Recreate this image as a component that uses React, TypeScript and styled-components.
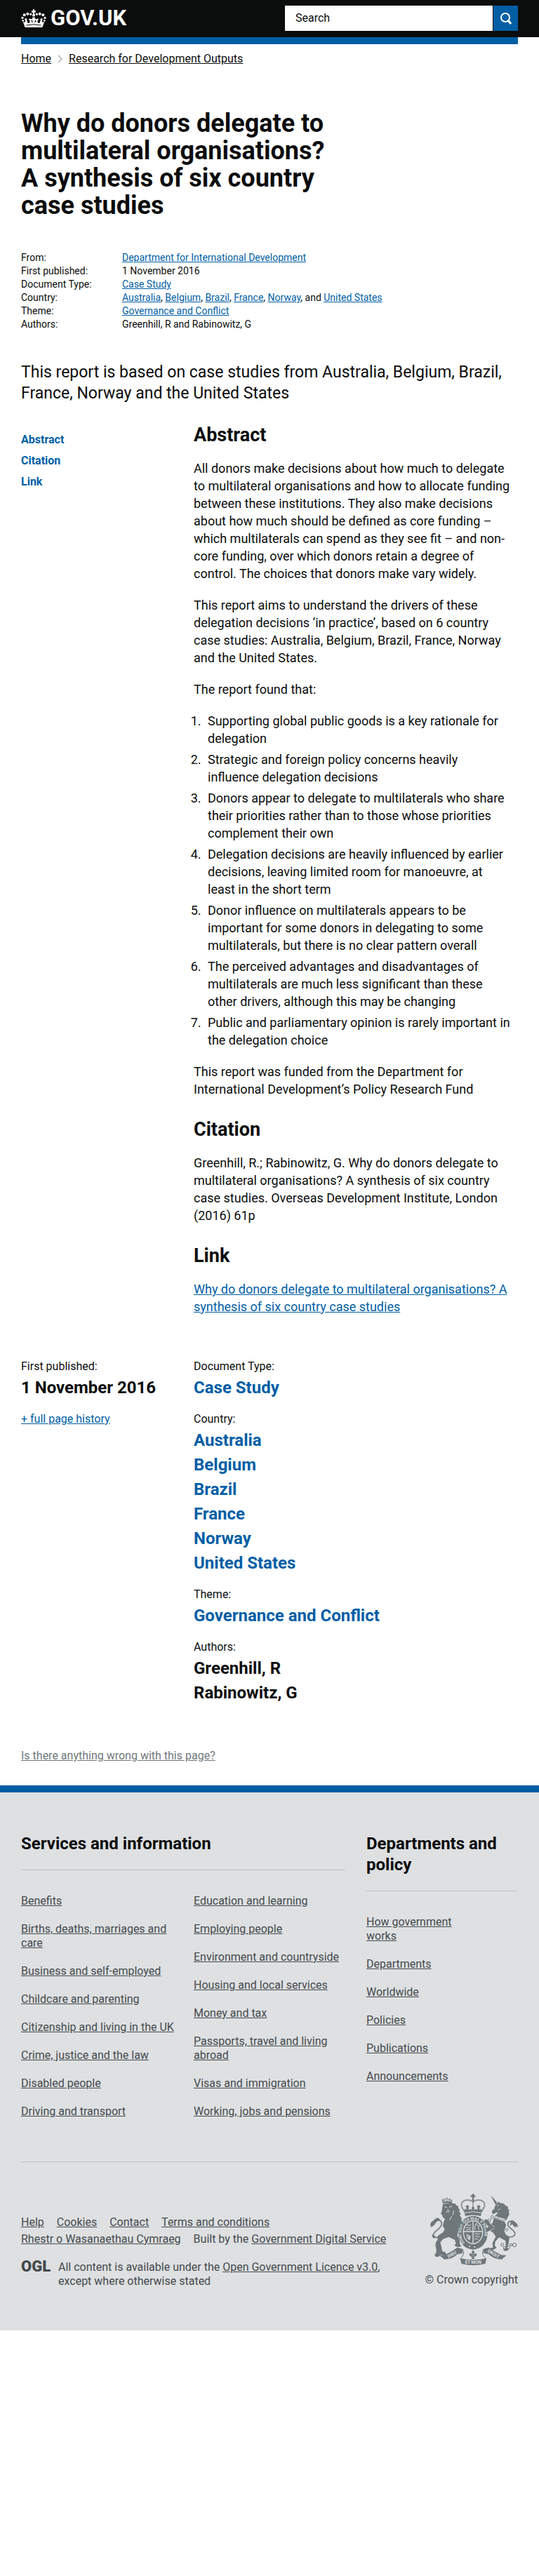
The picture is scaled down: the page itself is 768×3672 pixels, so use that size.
import React from 'react';
import styled, { createGlobalStyle } from 'styled-components';

const ink = '#0b0c0c';
const blue = '#005ea5';
const footerInk = '#454a4d';
const crestInk = '#6f777b';
const footerBg = '#dee0e2';

const GlobalStyle = createGlobalStyle`
  *, *::before, *::after { box-sizing: border-box; }
  body {
    margin: 0;
    background: #fff;
    color: ${ink};
    font-family: Roboto, "Liberation Sans", Arial, sans-serif;
    font-size: 16px;
    line-height: 20px;
  }
  h1, h2, p, ul, ol, dl, dd { margin: 0; padding: 0; }
  ul { list-style: none; }
`;

const Container = styled.div`
  max-width: 1020px;
  margin: 0 auto;
  padding: 0 30px;
`;

/* ---------- Header ---------- */

const HeaderBand = styled.header`
  background: ${ink};
`;

const HeaderRow = styled(Container)`
  display: flex;
  align-items: flex-start;
  justify-content: space-between;
  padding-top: 8px;
  padding-bottom: 9px;
`;

const LogoLink = styled.a`
  display: flex;
  align-items: center;
  gap: 6px;
  height: 36px;
  color: #fff;
  font-size: 31px;
  line-height: 36px;
  font-weight: 700;
  text-decoration: none;
`;

const SearchForm = styled.form`
  display: flex;
  gap: 1px;
  width: 332px;
  height: 36px;
`;

const SearchInput = styled.input`
  flex: 1;
  min-width: 0;
  border: 0;
  border-radius: 0;
  padding: 0 15px;
  background: #fff;
  color: ${ink};
  font: inherit;
  &::placeholder { color: ${ink}; opacity: 1; }
`;

const SearchButton = styled.button`
  display: flex;
  align-items: center;
  justify-content: center;
  width: 35px;
  border: 0;
  padding: 0;
  background: ${blue};
`;

const BlueBar = styled.div`
  height: 10px;
  background: ${blue};
`;

const Breadcrumbs = styled.ol`
  display: flex;
  align-items: center;
  gap: 9px;
  padding-top: 11px;
  list-style: none;
  li { display: flex; align-items: center; gap: 9px; }
  a { color: ${ink}; }
`;

/* ---------- Title block ---------- */

const Title = styled.h1`
  max-width: 456px;
  margin-top: 63px;
  font-size: 36px;
  line-height: 39px;
  font-weight: 700;
`;

const TextLink = styled.a`
  color: ${blue};
`;

const Metadata = styled.dl`
  display: grid;
  grid-template-columns: 144px 1fr;
  margin-top: 45px;
  font-size: 14px;
  line-height: 19px;
`;

const Summary = styled.p`
  margin-top: 44px;
  font-size: 23px;
  line-height: 30px;
`;

/* ---------- Body ---------- */

const Columns = styled.div<{ $top: number }>`
  display: grid;
  grid-template-columns: 1fr 2fr;
  column-gap: 15px;
  margin-top: ${(p) => p.$top}px;
`;

const Contents = styled.ul`
  display: flex;
  flex-direction: column;
  gap: 10px;
  padding-top: 12px;
  a { color: ${blue}; font-weight: 700; text-decoration: none; }
`;

const Article = styled.article`
  font-size: 18px;
  line-height: 25px;
  p + p, p + ol, ol + p { margin-top: 20px; }
`;

const SectionTitle = styled.h2`
  margin-bottom: 20px;
  font-size: 27px;
  line-height: 30px;
  font-weight: 700;
  p + & { margin-top: 30px; }
`;

const Findings = styled.ol`
  padding-left: 15px;
  padding-right: 10px;
  li { padding-left: 5px; }
  li + li { margin-top: 5px; }
`;

const FactGroup = styled.div`
  & + & { margin-top: 20px; }
`;

const FactValue = styled.div`
  padding-top: 5px;
  font-size: 24px;
  line-height: 30px;
  font-weight: 700;
  a { color: ${blue}; text-decoration: none; }
`;

const HistoryLink = styled(TextLink)`
  display: inline-block;
  margin-top: 20px;
`;

const ReportProblem = styled.p`
  padding: 65px 0 32px;
  a { color: ${crestInk}; }
`;

/* ---------- Footer ---------- */

const FooterBand = styled.footer`
  border-top: 10px solid ${blue};
  padding: 58px 0 60px;
  background: ${footerBg};
  color: ${footerInk};
  a { color: ${footerInk}; }
`;

const FooterNav = styled.div`
  display: grid;
  grid-template-columns: minmax(0, 462fr) minmax(0, 216fr);
  column-gap: 30px;
  padding-bottom: 41px;
  border-bottom: 1px solid #bfc1c3;
`;

const FooterTitle = styled.h2`
  margin-bottom: 34px;
  border-bottom: 1px solid #bfc1c3;
  padding-bottom: 22px;
  color: ${ink};
  font-size: 24px;
  line-height: 30px;
  font-weight: 700;
`;

const FooterLists = styled.div`
  display: grid;
  grid-template-columns: 230px 1fr;
  column-gap: 16px;
`;

const FooterList = styled.ul<{ $narrow?: boolean }>`
  max-width: ${(p) => (p.$narrow ? '140px' : 'none')};
  li { margin-bottom: 20px; }
`;

const FooterMeta = styled.div`
  display: flex;
  align-items: flex-end;
  justify-content: space-between;
  padding-top: 45px;
`;

const SupportLinks = styled.ul`
  display: flex;
  flex-wrap: wrap;
  column-gap: 18px;
  max-width: 530px;
  line-height: 24px;
`;

const LicenceRow = styled.div`
  display: flex;
  gap: 12px;
  margin-top: 18px;
  p { max-width: 470px; }
`;

const OglMark = styled.span`
  width: 41px;
  font-size: 22px;
  line-height: 18px;
  font-weight: 900;
`;

const Copyright = styled.div`
  display: flex;
  flex-direction: column;
  align-items: flex-end;
  gap: 11px;
  padding-bottom: 2px;
  white-space: nowrap;
`;

const CrownIcon = () => (
  <svg width="36" height="27" viewBox="0 0 108 81" fill="#fff" aria-hidden="true">
    <path d="M50 1h8l-2 6h7v7h-7l2 7h-8l2-7h-7V7h7z" />
    <circle cx="54" cy="26" r="6" />
    <circle cx="41" cy="22" r="5" />
    <circle cx="67" cy="22" r="5" />
    <circle cx="28" cy="20" r="6" />
    <circle cx="80" cy="20" r="6" />
    <circle cx="14" cy="25" r="6" />
    <circle cx="94" cy="25" r="6" />
    <circle cx="6" cy="37" r="5" />
    <circle cx="102" cy="37" r="5" />
    <circle cx="8" cy="49" r="4" />
    <circle cx="100" cy="49" r="4" />
    <path d="M8 54l8 3 3-10-5-3 6-5 7 4-3 3 5 14 7-1 2-10-6-4 6-5 7 5-2 5 6 10v-12l-5 1v-8l5 1-1-7h12l-1 7 5-1v8l-5-1v12l6-10-2-5 7-5 6 5-6 4 2 10 7 1 5-14-3-3 7-4 6 5-5 3 3 10 8-3-9 24H17z" />
    <path d="M22 69q32-7 64 0" fill="none" stroke={ink} strokeWidth="3" />
  </svg>
);

const SearchIcon = () => (
  <svg width="18" height="18" viewBox="0 0 18 18" fill="none" stroke="#fff" strokeWidth="2" aria-hidden="true">
    <circle cx="8" cy="8" r="6" />
    <path d="M12 12l4 5" strokeWidth="3" />
  </svg>
);

const Chevron = () => (
  <svg width="7" height="12" viewBox="0 0 7 12" fill="none" stroke="#bfc1c3" strokeWidth="2" aria-hidden="true">
    <path d="M1 1l5 5-5 5" />
  </svg>
);

const Crest = () => (
  <svg width="125" height="102" viewBox="99 81 375 306" fill={crestInk} role="img" aria-label="Royal coat of arms">
    <defs>
      <path id="garter" d="M251 295A50 57 0 1 1 312 295" />
    </defs>

    {/* lion with its crown and tail */}
    <path d="M152 122l-3-20 8 7 3-10 7 7 4-11 5 11 8-6 2 10 8-5-3 20q-20-6-39-3z" />
    <path d="M154 113q18-4 36 0M160 103l4 9 6-9 5 9 6-8" fill="none" stroke={footerBg} strokeWidth="3" />
    <path d="M153 125q26-6 52-2l6 8 9 4-2 7 8 8-4 7 8 10-5 6 9 14-2 10 6 8-14 20-7 24-3 12q12 10 11 23l1 15 7 5-7 5-14-1-11-6 8-6-5-18-26-12-24 9-12 14 6 24 2 14 12 3 7 9-9 5-16-1-10 8-13-1-4-9 7-5 1-16-4-20q1-14 10-22l-3-10q6-12 24-20l9-14-8-14 2-14 7-17-10-8-2-10-6-3 4-10z" />
    <path d="M160 137l11 3M180 139l12-4M173 147l3 7 6 1M166 160l7-2 6 4M200 153l-5 20M190 178l-7 16" fill="none" stroke={footerBg} strokeWidth="3" />
    <path d="M152 256c-20 18-43 14-41 2 5-20 39-28 37-49-2-20-25-18-38-1" fill="none" stroke={crestInk} strokeWidth="5" />
    <path d="M135 185c-16-3-18 12-29 15-6 5-8 14-4 24 11-4 17-11 22-20 5-6 13-9 21-6z" />
    <path d="M122 263l-13-7-2 8 7 9z" />

    {/* royal crown */}
    <path d="M278 82h8v6h6v7h-6v6h-8v-6h-6v-7h6z" />
    <circle cx="282" cy="107" r="5" />
    <path d="M282 118c-9-14-46-14-49 8-1 14 7 20 11 31M282 118c9-14 46-14 49 8 1 14-7 20-11 31" fill="none" stroke={crestInk} strokeWidth="6" strokeDasharray="5 2" />
    <path d="M282 110v46" stroke={crestInk} strokeWidth="5" strokeDasharray="4 2" />
    <path d="M244 157l3-12 6 6 1-10-4-5 8-7 8 7-4 5 2 10 7-5 7 6-2-11 6-6 6 6-2 11 7-6 7 5 2-10-4-5 8-7 8 7-4 5 1 10 6-6 3 12-5 20q-34-9-66 0z" />
    <path d="M247 163q35-9 70 0" fill="none" stroke={footerBg} strokeWidth="3" />

    {/* garter and shield */}
    <ellipse cx="282" cy="248" rx="63" ry="72" />
    <ellipse cx="282" cy="246" rx="43" ry="51" fill={footerBg} />
    <ellipse cx="282" cy="246" rx="39" ry="47" />
    <path d="M282 199v94M243 243h78" stroke={footerBg} strokeWidth="4" />
    <path d="M253 217l8-5 4 6 9-4M251 227l10-3 4 5 9-4M253 236l10-2 10 2M290 236v-14q-1-10 8-14l3 9 9 3-7 6 5 10M256 255l15 9-5 15-9-10zM263 260v16M268 262l-4 15M289 254l9-3 4 5 9-4M289 265l9-3 4 5 8-4M288 276l7-3 4 4 5-4" fill="none" stroke={footerBg} strokeWidth="3" />
    <text fill={footerBg} fontSize="17" fontWeight="700">
      <textPath href="#garter" startOffset="6">HONI SOIT QUI MAL Y PENSE</textPath>
    </text>
    <circle cx="267" cy="306" r="3" fill={footerBg} />
    <circle cx="289" cy="309" r="3" fill={footerBg} />

    {/* unicorn, its mane, tail and chain */}
    <path d="M357 87l29 33-8 8z" />
    <path d="M379 128l8-7 5-6 5 6 15 2 11 10 9 5-1 7 6 7-3 8 4 8-6 10-7 16-8-6-33-8-4-9 10-9-8-1-13 8-5-4-1-9 10-14z" />
    <path d="M386 132l7-1M369 146l6 1M388 151l10-5" stroke={footerBg} strokeWidth="3" />
    <path d="M378 174l43 13-3 9-44-13z" fill="none" stroke={crestInk} strokeWidth="3" strokeDasharray="5 2" />
    <path d="M372 185l44 15 8 15-8 24 5 17 16 16-3 23-6 15 6 13-14 3-10-5 12-10-1-28-27-15-17 18-2 17 8 10-20 12-15-2 6-9 13-2-2-20 14-27-10-16-14-10-13 5-7-10 14-12-12-12-9-13 8-7 11 4 9 14 8 2z" />
    <path d="M341 187l16 24 18 13M354 239l19-10" fill="none" stroke={footerBg} strokeWidth="2" />
    <path d="M418 254c18 22 47 10 43-4-4-16-31-22-30-40 1-12 18-16 31-2" fill="none" stroke={crestInk} strokeWidth="5" />
    <path d="M445 195c11-2 17 8 26 15l3 16-8-6-3 7-13-15-10 6z" />
    <g fill="none" stroke={crestInk} strokeWidth="3">
      <circle cx="364" cy="181" r="6" />
      <circle cx="352" cy="195" r="6" />
      <circle cx="358" cy="222" r="5" />
      <circle cx="427" cy="235" r="5" />
      <circle cx="431" cy="272" r="5" />
      <circle cx="407" cy="299" r="6" />
      <circle cx="417" cy="313" r="6" />
      <circle cx="433" cy="311" r="6" />
      <circle cx="444" cy="300" r="5" />
      <circle cx="459" cy="300" r="8" />
    </g>

    {/* motto ribbon */}
    <path d="M139 345l23-2q29-14 53-32l24 7-2 18-22 4q-20 22-55 22z" />
    <path d="M425 345l-23-2q-29-14-53-32l-24 7 2 18 22 4q20 22 55 22z" />
    <path d="M226 357q56 14 114 0l-6 24q-52 12-101 0z" />
    <path d="M238 322q11 16-9 36M326 322q-11 16 9 36" fill="none" stroke={crestInk} strokeWidth="3" />
    <path d="M282 322l6 9-2 9 9-5 4 8-9 8h-4l3 9h-14l3-9h-4l-9-8 4-8 9 5-2-9z" />
    <path d="M280 336v14M284 336v14" stroke={footerBg} strokeWidth="1" />
    <g fill={footerBg} fontSize="19" fontWeight="700" textAnchor="middle">
      <text transform="translate(195 346) rotate(-31)">DIEU</text>
      <text x="283" y="381">ET MON</text>
      <text transform="translate(366 344) rotate(31)">DROIT</text>
    </g>
  </svg>
);

const countries = ['Australia', 'Belgium', 'Brazil', 'France', 'Norway', 'United States'];

const findings = [
  'Supporting global public goods is a key rationale for delegation',
  'Strategic and foreign policy concerns heavily influence delegation decisions',
  'Donors appear to delegate to multilaterals who share their priorities rather than to those whose priorities complement their own',
  'Delegation decisions are heavily influenced by earlier decisions, leaving limited room for manoeuvre, at least in the short term',
  'Donor influence on multilaterals appears to be important for some donors in delegating to some multilaterals, but there is no clear pattern overall',
  'The perceived advantages and disadvantages of multilaterals are much less significant than these other drivers, although this may be changing',
  'Public and parliamentary opinion is rarely important in the delegation choice',
];

const servicesLeft = [
  'Benefits',
  'Births, deaths, marriages and care',
  'Business and self-employed',
  'Childcare and parenting',
  'Citizenship and living in the UK',
  'Crime, justice and the law',
  'Disabled people',
  'Driving and transport',
];

const servicesRight = [
  'Education and learning',
  'Employing people',
  'Environment and countryside',
  'Housing and local services',
  'Money and tax',
  'Passports, travel and living abroad',
  'Visas and immigration',
  'Working, jobs and pensions',
];

const departments = ['How government works', 'Departments', 'Worldwide', 'Policies', 'Publications', 'Announcements'];

const LinkList = ({ items, narrow }: { items: string[]; narrow?: boolean }) => (
  <FooterList $narrow={narrow}>
    {items.map((item) => (
      <li key={item}><a href="#">{item}</a></li>
    ))}
  </FooterList>
);

const Fact = ({ label, values, linked }: { label: string; values: string[]; linked?: boolean }) => (
  <FactGroup>
    <div>{label}</div>
    {values.map((value) => (
      <FactValue key={value}>{linked ? <a href="#">{value}</a> : value}</FactValue>
    ))}
  </FactGroup>
);

export default function App() {
  return (
    <>
      <GlobalStyle />
      <HeaderBand>
        <HeaderRow>
          <LogoLink href="#"><CrownIcon />GOV.UK</LogoLink>
          <SearchForm role="search">
            <SearchInput type="search" placeholder="Search" aria-label="Search" />
            <SearchButton type="submit" aria-label="Search"><SearchIcon /></SearchButton>
          </SearchForm>
        </HeaderRow>
      </HeaderBand>

      <Container as="main">
        <BlueBar />
        <Breadcrumbs>
          <li><a href="#">Home</a></li>
          <li><Chevron /><a href="#">Research for Development Outputs</a></li>
        </Breadcrumbs>

        <Title>Why do donors delegate to multilateral organisations? A synthesis of six country case studies</Title>

        <Metadata>
          <dt>From:</dt>
          <dd><TextLink href="#">Department for International Development</TextLink></dd>
          <dt>First published:</dt>
          <dd>1 November 2016</dd>
          <dt>Document Type:</dt>
          <dd><TextLink href="#">Case Study</TextLink></dd>
          <dt>Country:</dt>
          <dd>
            {countries.map((country, i) => (
              <React.Fragment key={country}>
                {i > 0 && ', '}
                {i === countries.length - 1 && 'and '}
                <TextLink href="#">{country}</TextLink>
              </React.Fragment>
            ))}
          </dd>
          <dt>Theme:</dt>
          <dd><TextLink href="#">Governance and Conflict</TextLink></dd>
          <dt>Authors:</dt>
          <dd>Greenhill, R and Rabinowitz, G</dd>
        </Metadata>

        <Summary>
          This report is based on case studies from Australia, Belgium, Brazil, France, Norway and the United States
        </Summary>

        <Columns $top={29}>
          <nav aria-label="Contents">
            <Contents>
              <li><a href="#abstract">Abstract</a></li>
              <li><a href="#citation">Citation</a></li>
              <li><a href="#link">Link</a></li>
            </Contents>
          </nav>
          <Article>
            <SectionTitle id="abstract">Abstract</SectionTitle>
            <p>
              All donors make decisions about how much to delegate to multilateral organisations and how to allocate
              funding between these institutions. They also make decisions about how much should be defined as core
              funding – which multilaterals can spend as they see fit – and non-core funding, over which donors retain
              a degree of control. The choices that donors make vary widely.
            </p>
            <p>
              This report aims to understand the drivers of these delegation decisions ‘in practice’, based on 6
              country case studies: Australia, Belgium, Brazil, France, Norway and the United States.
            </p>
            <p>The report found that:</p>
            <Findings>
              {findings.map((text) => <li key={text}>{text}</li>)}
            </Findings>
            <p>
              This report was funded from the Department for International Development’s Policy Research Fund
            </p>
            <SectionTitle id="citation">Citation</SectionTitle>
            <p>
              Greenhill, R.; Rabinowitz, G. Why do donors delegate to multilateral organisations? A synthesis of six
              country case studies. Overseas Development Institute, London (2016) 61p
            </p>
            <SectionTitle id="link">Link</SectionTitle>
            <p>
              <TextLink href="#">
                Why do donors delegate to multilateral organisations? A synthesis of six country case studies
              </TextLink>
            </p>
          </Article>
        </Columns>

        <Columns $top={63}>
          <div>
            <Fact label="First published:" values={['1 November 2016']} />
            <HistoryLink href="#">+ full page history</HistoryLink>
          </div>
          <div>
            <Fact label="Document Type:" values={['Case Study']} linked />
            <Fact label="Country:" values={countries} linked />
            <Fact label="Theme:" values={['Governance and Conflict']} linked />
            <Fact label="Authors:" values={['Greenhill, R', 'Rabinowitz, G']} />
          </div>
        </Columns>

        <ReportProblem><a href="#">Is there anything wrong with this page?</a></ReportProblem>
      </Container>

      <FooterBand>
        <Container>
          <FooterNav>
            <div>
              <FooterTitle>Services and information</FooterTitle>
              <FooterLists>
                <LinkList items={servicesLeft} />
                <LinkList items={servicesRight} />
              </FooterLists>
            </div>
            <div>
              <FooterTitle>Departments and policy</FooterTitle>
              <LinkList items={departments} narrow />
            </div>
          </FooterNav>
          <FooterMeta>
            <div>
              <SupportLinks>
                <li><a href="#">Help</a></li>
                <li><a href="#">Cookies</a></li>
                <li><a href="#">Contact</a></li>
                <li><a href="#">Terms and conditions</a></li>
                <li><a href="#">Rhestr o Wasanaethau Cymraeg</a></li>
                <li>Built by the <a href="#">Government Digital Service</a></li>
              </SupportLinks>
              <LicenceRow>
                <OglMark>OGL</OglMark>
                <p>
                  All content is available under the <a href="#">Open Government Licence v3.0</a>, except where
                  otherwise stated
                </p>
              </LicenceRow>
            </div>
            <Copyright>
              <Crest />
              <span>© Crown copyright</span>
            </Copyright>
          </FooterMeta>
        </Container>
      </FooterBand>
    </>
  );
}
